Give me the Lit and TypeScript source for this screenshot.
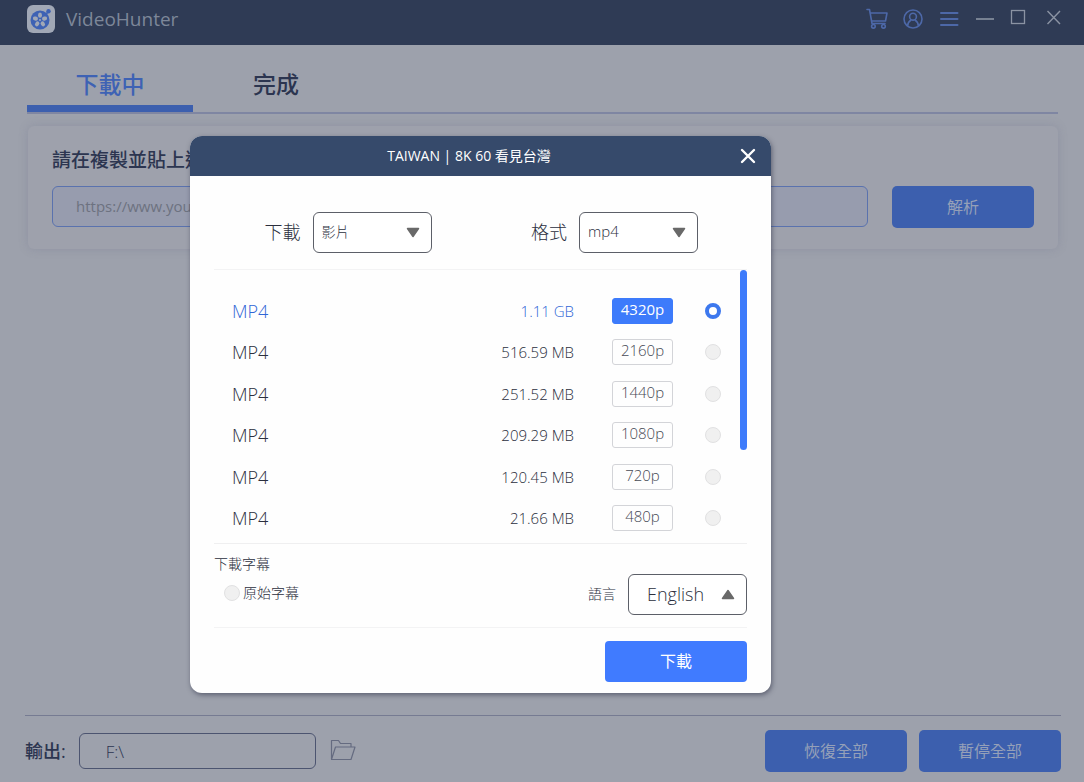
import { LitElement, html, css } from "lit";
import { customElement, state } from "lit/decorators.js";

interface Quality {
  format: string;
  size: string;
  resolution: string;
}

const QUALITIES: Quality[] = [
  { format: "MP4", size: "1.11 GB", resolution: "4320p" },
  { format: "MP4", size: "516.59 MB", resolution: "2160p" },
  { format: "MP4", size: "251.52 MB", resolution: "1440p" },
  { format: "MP4", size: "209.29 MB", resolution: "1080p" },
  { format: "MP4", size: "120.45 MB", resolution: "720p" },
  { format: "MP4", size: "21.66 MB", resolution: "480p" },
];

@customElement("download-dialog")
export class DownloadDialog extends LitElement {
  @state() private selected = "4320p";

  static styles = css`
    :host {
      display: block;
      border-radius: 12px;
      background: #fefefe;
      box-shadow: 1px 2px 5px rgba(40, 44, 66, 0.55);
      color: #2b2f3d;
      overflow: hidden;
    }
    * { box-sizing: border-box; }
    button, select, input { font: inherit; color: inherit; margin: 0; }
    .bar {
      display: flex;
      align-items: center;
      height: 40px;
      padding: 0 15px 0 8px;
      background: #364a6b;
      color: #fff;
    }
    .bar h2 {
      flex: 1;
      margin: 0;
      padding-bottom: 2px;
      text-align: center;
      font-size: 14px;
      font-weight: 400;
    }
    .close {
      display: flex;
      padding: 0;
      border: 0;
      background: none;
    }
    .body { padding: 36px 24px 11px; }
    .choices {
      display: grid;
      grid-template-columns: 1fr 1fr;
      padding-bottom: 16px;
    }
    .choice {
      display: flex;
      align-items: center;
      justify-content: flex-end;
      gap: 12px;
      padding-right: 49px;
      font-size: 18px;
      font-weight: 300;
    }
    .choice label { padding-bottom: 4px; }
    .picker { position: relative; display: flex; }
    .picker select {
      appearance: none;
      width: 119px;
      height: 41px;
      padding: 0 28px 3px 8px;
      border: 1px solid #5c5f68;
      border-radius: 6px;
      background: #fff;
      font-size: 15px;
      font-weight: 300;
    }
    .picker.kind select { font-size: 14px; }
    .picker.wide select { padding-left: 18px; padding-bottom: 1px; font-size: 18px; }
    .arrow {
      position: absolute;
      top: 15px;
      right: 12px;
      pointer-events: none;
    }
    .list {
      display: flex;
      border-top: 1px solid #f3f3f4;
      border-bottom: 1px solid #efeff0;
      min-height: 275px;
    }
    table {
      flex: 1;
      height: 249px;
      margin-top: 20px;
      border-collapse: collapse;
    }
    td { padding: 0; vertical-align: middle; }
    .format { padding-left: 18px; font-size: 18px; font-weight: 300; }
    .size { text-align: right; font-size: 15px; font-weight: 300; }
    .res { width: 112px; padding-right: 13px; }
    .pick { width: 54px; }
    .badge {
      display: block;
      width: 61px;
      height: 26px;
      margin-left: auto;
      border: 1px solid #d3d4d8;
      border-radius: 3px;
      text-align: center;
      font-size: 15px;
      font-weight: 300;
      line-height: 21px;
      color: #474a55;
      cursor: pointer;
    }
    .on .format, .on .size { color: #2f66d6; }
    .on .badge {
      border-color: #3d7bfb;
      background: #3d7bfb;
      color: #fff;
      font-weight: 400;
    }
    .dot {
      appearance: none;
      display: block;
      width: 16px;
      height: 16px;
      border: 1px solid #e1e1e2;
      border-radius: 50%;
      background: #f0f0f0;
    }
    .pick .dot { margin: 0 auto; }
    .dot:checked {
      border: 4px solid #3d78ee;
      background: #fff;
    }
    .thumb {
      width: 7px;
      height: 180px;
      border-radius: 4px;
      background: #3d7bfb;
    }
    .subs {
      display: flex;
      justify-content: space-between;
      height: 84px;
      border-bottom: 1px solid #f3f3f4;
      font-size: 14px;
      font-weight: 300;
    }
    .subs h3 {
      margin: 0;
      padding-top: 10px;
      font: inherit;
      line-height: 20px;
    }
    .original {
      display: flex;
      align-items: center;
      gap: 3px;
      margin-top: 9px;
      padding-left: 10px;
      line-height: 20px;
    }
    .lang {
      display: flex;
      align-items: center;
      gap: 12px;
      height: 41px;
      margin-top: 30px;
    }
    .lang label { padding-bottom: 4px; }
    .actions { display: flex; justify-content: flex-end; padding-top: 13px; }
    .go {
      width: 142px;
      height: 41px;
      padding: 0 0 3px;
      border: 0;
      border-radius: 4px;
      background: #407bff;
      color: #fff;
      font-size: 16px;
    }
  `;

  private arrow(up: boolean) {
    return html`<svg class="arrow" width="14" height="11" viewBox="0 0 14 11" aria-hidden="true">
      <path
        d=${up ? "M7 1.5 12.5 9.5H1.5Z" : "M7 9.5 1.5 1.5H12.5Z"}
        fill="#696969" stroke="#696969" stroke-width="1.5" stroke-linejoin="round"
      /></svg>`;
  }

  render() {
    return html`
      <header class="bar">
        <h2>TAIWAN | 8K 60 看見台灣</h2>
        <button class="close" aria-label="關閉">
          <svg width="16" height="16" viewBox="0 0 16 16">
            <path d="M2 2 14 14M14 2 2 14" stroke="#fff" stroke-width="2.4" stroke-linecap="round" />
          </svg>
        </button>
      </header>
      <div class="body">
        <div class="choices">
          <div class="choice">
            <label for="kind">下載</label>
            <span class="picker kind">
              <select id="kind"><option>影片</option><option>音訊</option></select>
              ${this.arrow(false)}
            </span>
          </div>
          <div class="choice">
            <label for="format">格式</label>
            <span class="picker">
              <select id="format"><option>mp4</option><option>webm</option></select>
              ${this.arrow(false)}
            </span>
          </div>
        </div>
        <div class="list">
          <table>
            <tbody>
              ${QUALITIES.map(
                (q) => html`<tr class=${q.resolution === this.selected ? "on" : ""}>
                  <td class="format">${q.format}</td>
                  <td class="size">${q.size}</td>
                  <td class="res"><label class="badge" for="r${q.resolution}">${q.resolution}</label></td>
                  <td class="pick">
                    <input
                      class="dot" type="radio" name="quality" id="r${q.resolution}"
                      .checked=${q.resolution === this.selected}
                      @change=${() => (this.selected = q.resolution)}
                    />
                  </td>
                </tr>`
              )}
            </tbody>
          </table>
          <div class="thumb"></div>
        </div>
        <div class="subs">
          <div>
            <h3>下載字幕</h3>
            <label class="original"><input class="dot" type="checkbox" />原始字幕</label>
          </div>
          <div class="lang">
            <label for="lang">語言</label>
            <span class="picker wide">
              <select id="lang"><option>English</option><option>中文</option></select>
              ${this.arrow(true)}
            </span>
          </div>
        </div>
        <div class="actions"><button class="go">下載</button></div>
      </div>
    `;
  }
}

@customElement("app-root")
export class AppRoot extends LitElement {
  static styles = css`
    :host {
      position: relative;
      display: flex;
      flex-direction: column;
      min-height: 100vh;
      background: #9da1ac;
      color: #2c3550;
      font-family: "Open Sans", "Noto Sans CJK TC", sans-serif;
    }
    * { box-sizing: border-box; }
    button, input { font: inherit; color: inherit; margin: 0; }
    .top {
      display: flex;
      align-items: center;
      height: 45px;
      padding: 0 19px 7px 27px;
      background: #2f3b55;
      color: #7d8799;
    }
    .name { margin-left: 11px; font-size: 19px; line-height: 28px; }
    .tools { display: flex; align-items: center; gap: 12px; margin-left: auto; }
    .tools button { display: flex; padding: 0; border: 0; background: none; }
    .tabs {
      display: flex;
      height: 69px;
      margin: 0 26px 0 27px;
      border-bottom: 2px solid #7f86a2;
    }
    .tab {
      width: 166px;
      padding: 15px 0 0;
      border: 0;
      border-bottom: 7px solid transparent;
      background: none;
      font-size: 23px;
      font-weight: 500;
      text-align: center;
    }
    .tab.active { color: #3e62b4; border-color: #3c5fae; }
    .card {
      margin: 12px 26px 0 28px;
      padding: 20px 24px 21px;
      border-radius: 6px;
      background: #9ea1ac;
      box-shadow: 0 0 10px rgba(110, 114, 138, 0.3);
    }
    .card label { display: block; font-size: 19px; line-height: 28px; font-weight: 500; }
    .row { display: flex; gap: 24px; margin-top: 12px; }
    .url {
      flex: 1;
      min-width: 0;
      height: 41px;
      padding: 0 23px 2px;
      border: 1px solid #5a72ae;
      border-radius: 6px;
      background: #979cae;
      font-size: 15px;
    }
    .url::placeholder { color: #6d7280; }
    .solid {
      width: 142px;
      height: 42px;
      padding: 0 0 3px;
      border: 0;
      border-radius: 5px;
      background: #3c5fae;
      color: #95a0b8;
      font-size: 16px;
    }
    .foot {
      display: flex;
      align-items: center;
      height: 67px;
      margin: auto 23px 0 25px;
      padding-top: 4px;
      border-top: 1px solid #767b92;
    }
    .foot label { padding-bottom: 2px; font-size: 18px; font-weight: 500; }
    .path {
      width: 237px;
      height: 36px;
      margin: 0 14px 0 13px;
      padding: 0 26px;
      border: 1px solid #4c5470;
      border-radius: 6px;
      background: transparent;
      font-size: 17px;
      font-weight: 300;
    }
    .browse { display: flex; padding: 0 0 3px; border: 0; background: none; }
    .all { display: flex; gap: 12px; margin-left: auto; }
    .layer {
      position: absolute;
      inset: 0;
      padding: 136px 313px 0 190px;
    }
  `;

  render() {
    return html`
      <header class="top">
        <svg width="28" height="28" viewBox="0 0 28 28" aria-hidden="true">
          <rect width="28" height="28" rx="6" fill="#a1a8b6" />
          <circle cx="13" cy="15" r="9.5" fill="#3e62b4" />
          <g fill="#a1a8b6">
            <ellipse cx="13" cy="10.2" rx="2" ry="2.6" />
            <ellipse cx="13" cy="10.2" rx="2" ry="2.6" transform="rotate(72 13 15)" />
            <ellipse cx="13" cy="10.2" rx="2" ry="2.6" transform="rotate(144 13 15)" />
            <ellipse cx="13" cy="10.2" rx="2" ry="2.6" transform="rotate(216 13 15)" />
            <ellipse cx="13" cy="10.2" rx="2" ry="2.6" transform="rotate(288 13 15)" />
            <circle cx="13" cy="15" r="1" />
          </g>
          <circle cx="21.5" cy="6.3" r="2.2" fill="#3e62b4" />
          <path d="M21 7 18.6 9.6" stroke="#3e62b4" stroke-width="1.6" />
        </svg>
        <span class="name">VideoHunter</span>
        <div class="tools">
          <button aria-label="購物車">
            <svg width="24" height="24" viewBox="0 0 24 24" fill="none" stroke="#4d68a8" stroke-width="1.6" stroke-linecap="round" stroke-linejoin="round">
              <path d="M2 2.5H4.5L7 16.5H20M4.9 6H22L20.5 14H6.6" />
              <circle cx="8.4" cy="19.3" r="1.8" /><circle cx="18.5" cy="19.3" r="1.8" />
            </svg>
          </button>
          <button aria-label="帳戶">
            <svg width="24" height="24" viewBox="0 0 24 24" fill="none" stroke="#4d68a8" stroke-width="1.6">
              <circle cx="12" cy="12" r="9" /><circle cx="12" cy="9.7" r="3.4" />
              <path d="M6.6 18.8C6.8 15.8 8.4 14 10 13M17.4 18.8C17.2 15.8 15.6 14 14 13" />
            </svg>
          </button>
          <button aria-label="選單">
            <svg width="24" height="24" viewBox="0 0 24 24" stroke="#4d68a8" stroke-width="2" stroke-linecap="round">
              <path d="M4 6H20.5M4 12H20.5M4 18H20.5" />
            </svg>
          </button>
          <button aria-label="最小化">
            <svg width="24" height="24" viewBox="0 0 24 24" stroke="#8b93a3" stroke-width="1.6">
              <path d="M3 12H21" />
            </svg>
          </button>
          <button aria-label="最大化">
            <svg width="24" height="24" viewBox="0 0 24 24" fill="none" stroke="#8b93a3" stroke-width="1.3">
              <rect x="2.5" y="3.5" width="13" height="13" />
            </svg>
          </button>
          <button aria-label="關閉">
            <svg width="20" height="24" viewBox="0 0 20 24" stroke="#8b93a3" stroke-width="1.4">
              <path d="M2.5 4 15 17M15 4 2.5 17" />
            </svg>
          </button>
        </div>
      </header>
      <nav class="tabs">
        <button class="tab active">下載中</button>
        <button class="tab">完成</button>
      </nav>
      <section class="card">
        <label for="url">請在複製並貼上連結</label>
        <div class="row">
          <input class="url" id="url" type="text" placeholder="https://www.youtube.com/" />
          <button class="solid">解析</button>
        </div>
      </section>
      <footer class="foot">
        <label for="path">輸出:</label>
        <input class="path" id="path" type="text" value="F:\\" />
        <button class="browse" aria-label="選擇資料夾">
          <svg width="26" height="22" viewBox="0 0 26 22" fill="none" stroke="#656b80" stroke-width="1.2" stroke-linejoin="round">
            <path d="M1.5 20V1.5H8.5L10.5 4.5H21V8M1.5 20.5 5.5 8H25L21 20.5Z" />
          </svg>
        </button>
        <div class="all">
          <button class="solid">恢復全部</button>
          <button class="solid">暫停全部</button>
        </div>
      </footer>
      <div class="layer">
        <download-dialog role="dialog" aria-label="下載"></download-dialog>
      </div>
    `;
  }
}
